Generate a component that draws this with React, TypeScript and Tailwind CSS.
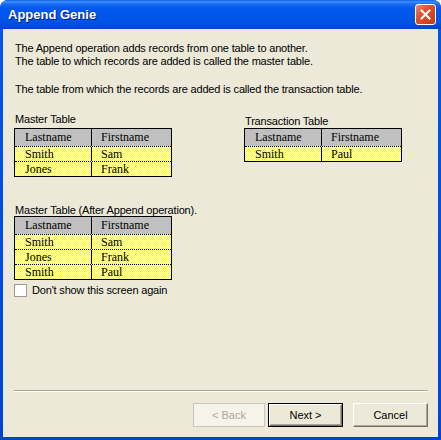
import React from "react";

const ui = { fontFamily: '"Liberation Sans", Arial, sans-serif' };
const serif = { fontFamily: '"Liberation Serif", "Times New Roman", serif' };

function DataTable({ rows }: { rows: [string, string][] }) {
  return (
    <div className="w-[158px] border border-black text-[12px] text-black tracking-normal" style={serif}>
      <div className="flex h-[17px] bg-[#c0c0c0] leading-[17px]">
        <div className="w-[77px] border-r border-black pl-[10px]">Lastname</div>
        <div className="flex-1 pl-[9px]">Firstname</div>
      </div>
      <div className="relative">
        <svg className="absolute inset-0 w-full h-full" aria-hidden="true">
          <defs>
            <pattern id="dots" width="2" height="2" patternUnits="userSpaceOnUse">
              <rect width="2" height="2" fill="#ffffff" />
              <rect x="0" y="0" width="1" height="1" fill="#ffff00" />
              <rect x="1" y="1" width="1" height="1" fill="#ffff00" />
            </pattern>
          </defs>
          <rect width="100%" height="100%" fill="url(#dots)" />
        </svg>
        {rows.map((r, i) => (
          <div key={i} className="relative flex h-[15px] border-t border-dotted border-black leading-[14px]">
            <div className="w-[77px] border-r border-black pl-[10px]">{r[0]}</div>
            <div className="flex-1 pl-[9px]">{r[1]}</div>
          </div>
        ))}
      </div>
    </div>
  );
}

function Button({ label, variant }: { label: string; variant: "disabled" | "default" | "normal" }) {
  if (variant === "disabled") {
    return (
      <div className="w-[72px] h-[24px] border border-[#c9c7ba] flex items-center justify-center text-[11px] text-[#aca899] bg-[#f5f4ea]">
        {label}
      </div>
    );
  }
  if (variant === "default") {
    return (
      <div className="w-[75px] h-[24px] border border-black">
        <div className="w-full h-full border-t border-l border-white border-r border-b border-r-[#716f64] border-b-[#716f64] flex items-center justify-center text-[11px] text-black bg-[#ece9d8] shadow-[inset_-1px_-1px_0_#aca899]">
          {label}
        </div>
      </div>
    );
  }
  return (
    <div className="w-[75px] h-[24px] border-t border-l border-white border-r border-b border-r-[#716f64] border-b-[#716f64] flex items-center justify-center text-[11px] text-black bg-[#ece9d8] shadow-[inset_-1px_-1px_0_#aca899]">
      {label}
    </div>
  );
}

export default function App() {
  return (
    <div
      className="w-[441px] h-[440px] flex flex-col rounded-t-[8px] overflow-hidden bg-[linear-gradient(to_bottom,#0058ee,#0044d6)]"
      style={ui}
    >
      <div className="h-[29px] flex items-center pl-[8px] pr-[5px] bg-[linear-gradient(to_bottom,#0a5fe6_0%,#3d8ff9_6%,#1a6af0_14%,#0058ee_30%,#0055e8_70%,#0049dc_92%,#003dc8_100%)]">
        <span className="text-white font-bold text-[13px] leading-none [text-shadow:1px_1px_0_#0a1e6e]">
          Append Genie
        </span>
        <div className="ml-auto w-[21px] h-[21px] rounded-[3px] border border-white bg-[linear-gradient(135deg,#e98a6c_0%,#e0502a_40%,#c93b14_100%)] flex items-center justify-center">
          <svg width="11" height="11" viewBox="0 0 11 11">
            <path d="M1.5 1.5 L9.5 9.5 M9.5 1.5 L1.5 9.5" stroke="white" strokeWidth="2" strokeLinecap="square" />
          </svg>
        </div>
      </div>
      <div className="flex-1 mx-[3px] mb-[3px] bg-[#ece9d8] flex flex-col pl-[11px] pr-[10px] pt-[13px] pb-[10px] text-[11px] leading-[13px] tracking-[-0.18px] text-black">
        <div className="pl-[1px]">
          <div>The Append operation adds records from one table to another.</div>
          <div>The table to which records are added is called the master table.</div>
          <div className="mt-[15px]">The table from which the records are added is called the transaction table.</div>
        </div>
        <div className="flex mt-[17px]">
          <div className="flex flex-col">
            <div className="h-[15px] pl-[1px]">Master Table</div>
            <DataTable rows={[["Smith", "Sam"], ["Jones", "Frank"]]} />
          </div>
          <div className="flex flex-col ml-[72px]">
            <div className="h-[15px] pt-[2px] pl-[1px]">Transaction Table</div>
            <DataTable rows={[["Smith", "Paul"]]} />
          </div>
        </div>
        <div className="mt-[27px] h-[12px] pl-[1px]">Master Table (After Append operation).</div>
        <DataTable rows={[["Smith", "Sam"], ["Jones", "Frank"], ["Smith", "Paul"]]} />
        <label className="flex items-center mt-[4px] h-[13px]">
          <span className="w-[13px] h-[13px] border border-[#9a9a9a] bg-white block" />
          <span className="ml-[5px]">Don't show this screen again</span>
        </label>
        <div className="mt-auto border-t border-[#aca899] border-b border-b-white h-[2px]" />
        <div className="flex justify-end mt-[11px] tracking-normal">
          <Button label="< Back" variant="disabled" />
          <div className="ml-[3px]">
            <Button label="Next >" variant="default" />
          </div>
          <div className="ml-[10px]">
            <Button label="Cancel" variant="normal" />
          </div>
        </div>
      </div>
    </div>
  );
}
